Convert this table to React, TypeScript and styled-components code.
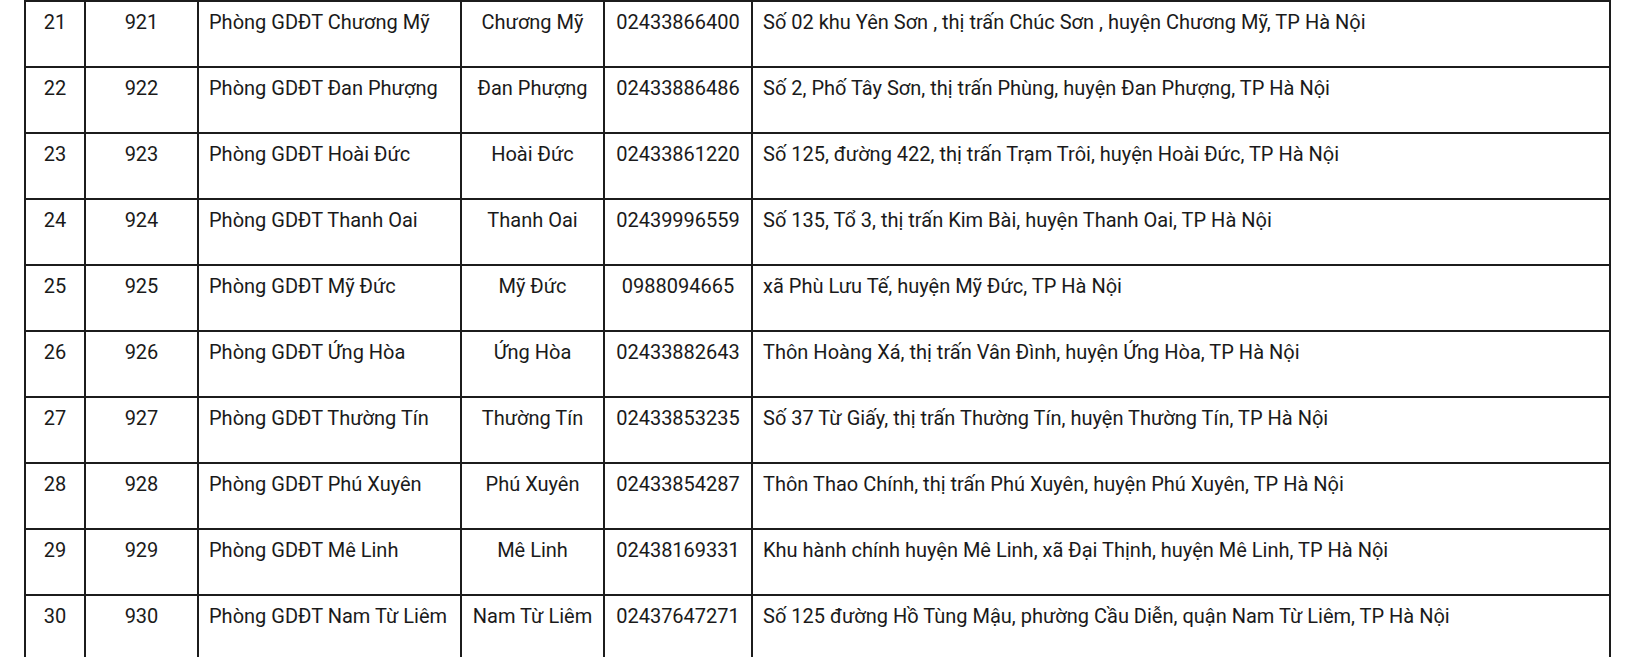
import styled, { createGlobalStyle } from 'styled-components';

const GlobalStyle = createGlobalStyle`
	html, body {
		margin: 0;
		padding: 0;
		background: #fff;
		overflow: hidden;
	}
	body {
		font-family: Roboto, "Noto Sans", "Liberation Sans", sans-serif;
		color: #1a1a1a;
	}
`;

const rows = [
	["21", "921", "Phòng GDĐT Chương Mỹ", "Chương Mỹ", "02433866400", "Số 02 khu Yên Sơn , thị trấn Chúc Sơn , huyện Chương Mỹ, TP Hà Nội"],
	["22", "922", "Phòng GDĐT Đan Phượng", "Đan Phượng", "02433886486", "Số 2, Phố Tây Sơn, thị trấn Phùng, huyện Đan Phượng, TP Hà Nội"],
	["23", "923", "Phòng GDĐT Hoài Đức", "Hoài Đức", "02433861220", "Số 125, đường 422, thị trấn Trạm Trôi, huyện Hoài Đức, TP Hà Nội"],
	["24", "924", "Phòng GDĐT Thanh Oai", "Thanh Oai", "02439996559", "Số 135, Tổ 3, thị trấn Kim Bài, huyện Thanh Oai, TP Hà Nội"],
	["25", "925", "Phòng GDĐT Mỹ Đức", "Mỹ Đức", "0988094665", "xã Phù Lưu Tế, huyện Mỹ Đức, TP Hà Nội"],
	["26", "926", "Phòng GDĐT Ứng Hòa", "Ứng Hòa", "02433882643", "Thôn Hoàng Xá, thị trấn Vân Đình, huyện Ứng Hòa, TP Hà Nội"],
	["27", "927", "Phòng GDĐT Thường Tín", "Thường Tín", "02433853235", "Số 37 Từ Giấy, thị trấn Thường Tín, huyện Thường Tín, TP Hà Nội"],
	["28", "928", "Phòng GDĐT Phú Xuyên", "Phú Xuyên", "02433854287", "Thôn Thao Chính, thị trấn Phú Xuyên, huyện Phú Xuyên, TP Hà Nội"],
	["29", "929", "Phòng GDĐT Mê Linh", "Mê Linh", "02438169331", "Khu hành chính huyện Mê Linh, xã Đại Thịnh, huyện Mê Linh, TP Hà Nội"],
	["30", "930", "Phòng GDĐT Nam Từ Liêm", "Nam Từ Liêm", "02437647271", "Số 125 đường Hồ Tùng Mậu, phường Cầu Diễn, quận Nam Từ Liêm, TP Hà Nội"],
];

// which columns are centred
const centered = [true, true, false, true, true, false];

const Page = styled.div`
	padding-left: 24px;
`;

const Table = styled.div`
	display: grid;
	grid-template-columns: 58px 111px 261px 141px 146px 856px;
	grid-auto-rows: 64px;
	gap: 2px;
	padding: 2px;
	width: max-content;
	background: #1c1c1c;
`;

const Cell = styled.div<{ $center: boolean }>`
	background: #fff;
	padding: 9px 10px 0;
	font-size: 20px;
	line-height: 22px;
	white-space: nowrap;
	text-align: ${({ $center }) => ($center ? 'center' : 'left')};
`;

const App = () => {
	return (
		<Page>
			<GlobalStyle />
			<Table role="table">
				{rows.map((row) =>
					row.map((text, i) => (
						<Cell key={row[0] + '-' + i} $center={centered[i]} role="cell">
							{text}
						</Cell>
					))
				)}
			</Table>
		</Page>
	);
};

export default App;
